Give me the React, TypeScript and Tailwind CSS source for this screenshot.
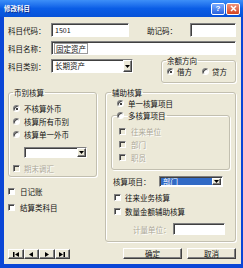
import React from "react";

const sunken =
  "border border-t-[#808080] border-l-[#808080] border-b-white border-r-white shadow-[inset_1px_1px_0_#404040]";
const raised =
  "border border-t-white border-l-white border-b-[#404040] border-r-[#404040] shadow-[inset_-1px_-1px_0_#808080] bg-[#ece9d8]";
const group = "border border-[#c2bfb0] rounded-[3px] shadow-[inset_1px_1px_0_#fff,1px_1px_0_#fff]";
const txt = "text-[7.5px] leading-[13px] whitespace-nowrap";
const dim = "text-[#aca899] [text-shadow:1px_1px_0_#fff]";

function Arrow() {
  return (
    <span className={`w-[9px] h-full flex items-center justify-center shrink-0 ${raised}`}>
      <svg width="5" height="3" viewBox="0 0 5 3">
        <path d="M0 0h5L2.5 3z" fill="#000" />
      </svg>
    </span>
  );
}

function Radio({ on }: { on?: boolean }) {
  return (
    <span className={`w-[7px] h-[7px] shrink-0 rounded-full bg-white flex items-center justify-center ${sunken}`}>
      {on && <span className="w-[2px] h-[2px] rounded-full bg-black" />}
    </span>
  );
}

function Check({ off }: { off?: boolean }) {
  return <span className={`w-[7px] h-[7px] shrink-0 ${off ? "bg-[#ece9d8]" : "bg-white"} ${sunken}`} />;
}

function NavBtn({ kind }: { kind: "first" | "prev" | "next" | "last" }) {
  return (
    <span className={`w-[15.5px] h-full flex items-center justify-center ${raised} bg-[#d6d3ca]`}>
      <svg width="6" height="5" viewBox="0 0 6 5" fill="#000">
        {kind === "first" && (
          <>
            <rect x="0" y="0" width="1.5" height="5" />
            <path d="M6 0v5L2 2.5z" />
          </>
        )}
        {kind === "prev" && <path d="M5 0v5L1 2.5z" />}
        {kind === "next" && <path d="M1 0v5l4-2.5z" />}
        {kind === "last" && (
          <>
            <path d="M0 0v5l4-2.5z" />
            <rect x="4.5" y="0" width="1.5" height="5" />
          </>
        )}
      </svg>
    </span>
  );
}

export default function App() {
  return (
    <div className="w-[243px] h-[268px] flex flex-col bg-[#0a46d6] font-['Noto_Sans_CJK_SC',sans-serif] text-[#111] overflow-hidden">
      {/* title bar */}
      <div className="h-[17px] shrink-0 flex items-center pl-[4px] pr-[3px] bg-linear-to-b from-[#3d8ff8] via-[#0a5de6] to-[#0752d8]">
        <span className="text-[6.5px] font-bold text-white leading-none [text-shadow:1px_1px_0_#0a2a8a]">修改科目</span>
        <div className="ml-auto flex gap-[1px]">
          <span className="w-[14px] h-[12px] rounded-[2px] border border-white bg-linear-to-b from-[#79aaff] to-[#2a62de] text-white text-[8px] font-bold leading-none flex items-center justify-center font-['Liberation_Sans',sans-serif]">
            ?
          </span>
          <span className="w-[14px] h-[12px] rounded-[2px] border border-white bg-linear-to-b from-[#f0937a] to-[#d4411c] flex items-center justify-center">
            <svg width="7" height="7" viewBox="0 0 7 7">
              <path d="M1 1l5 5M6 1L1 6" stroke="#fff" strokeWidth="1.5" />
            </svg>
          </span>
        </div>
      </div>

      <div className="flex-1 flex pl-[4px] pr-[5px] pb-[4px]">
        <div className="flex-1 bg-[#ece9d8] pt-[6px] pl-[4px] pr-[5px] flex flex-col">
          {/* row 1 */}
          <div className="h-[14px] flex items-center">
            <span className={`${txt} w-[43px]`}>科目代码：</span>
            <span className={`w-[78px] h-full bg-white flex items-center pl-[3px] text-[7px] ${sunken}`}>1501</span>
            <span className={`${txt} ml-[18px]`}>助记码：</span>
            <span className={`ml-auto w-[46px] h-full bg-white ${sunken}`} />
          </div>
          {/* row 2 */}
          <div className="h-[14px] mt-[4px] flex items-center">
            <span className={`${txt} w-[43px]`}>科目名称：</span>
            <span className={`flex-1 h-full bg-white flex items-center pl-[2px] ${sunken}`}>
              <span className="text-[7.5px] leading-[9px] border border-[#9a9a9a] px-[1px]">固定资产</span>
            </span>
          </div>
          {/* row 3 */}
          <div className="mt-[4px] flex items-start">
            <div className="h-[14px] flex items-center">
              <span className={`${txt} w-[43px]`}>科目类别：</span>
              <span className={`w-[82px] h-full bg-white flex ${sunken}`}>
                <span className="flex-1 text-[7.5px] leading-[12px] pl-[3px]">长期资产</span>
                <Arrow />
              </span>
            </div>
            <fieldset className={`ml-auto -mt-[3px] w-[75px] h-[27px] ${group}`}>
              <legend className="ml-[4px] px-[1px] text-[7.5px] leading-[9px]">余额方向</legend>
              <div className="h-[13px] flex items-center pl-[5px]">
                <Radio on />
                <span className={`${txt} ml-[3px]`}>借方</span>
                <span className="ml-[10px]">
                  <Radio />
                </span>
                <span className={`${txt} ml-[3px]`}>贷方</span>
              </div>
            </fieldset>
          </div>

          {/* main */}
          <div className="mt-[5px] flex flex-1 pb-[5px]">
            {/* left column */}
            <div className="w-[89px] flex flex-col">
              <fieldset className={`h-[89px] pl-[4px] ${group}`}>
                <legend className="ml-0 px-[1px] text-[7.5px] leading-[9px]">币别核算</legend>
                <div className="pt-[5px] flex flex-col">
                  <div className="h-[13px] flex items-center gap-[4px]">
                    <Radio on />
                    <span className={txt}>不核算外币</span>
                  </div>
                  <div className="h-[13px] flex items-center gap-[4px]">
                    <Radio />
                    <span className={txt}>核算所有币别</span>
                  </div>
                  <div className="h-[13px] flex items-center gap-[4px]">
                    <Radio />
                    <span className={txt}>核算单一外币</span>
                  </div>
                  <span className={`mt-[6px] ml-[11px] w-[63px] h-[11px] bg-white flex ${sunken}`}>
                    <span className="flex-1" />
                    <Arrow />
                  </span>
                  <div className="mt-[4px] h-[13px] flex items-center gap-[4px]">
                    <Check off />
                    <span className={`${txt} ${dim}`}>期末调汇</span>
                  </div>
                </div>
              </fieldset>
              <div className="mt-[8px] h-[13px] flex items-center gap-[5px]">
                <Check />
                <span className={txt}>日记账</span>
              </div>
              <div className="mt-[3px] h-[13px] flex items-center gap-[5px]">
                <Check />
                <span className={txt}>结算类科目</span>
              </div>
              <div className="mt-auto h-[10px] flex">
                <NavBtn kind="first" />
                <NavBtn kind="prev" />
                <NavBtn kind="next" />
                <NavBtn kind="last" />
              </div>
            </div>

            {/* right column */}
            <div className="ml-[8px] flex-1 flex flex-col">
              <fieldset className={`h-[154px] ${group}`}>
                <legend className="ml-[5px] px-[1px] text-[7.5px] leading-[9px]">辅助核算</legend>
                <div className="h-[13px] flex items-center gap-[4px] pl-[11px]">
                  <Radio on />
                  <span className={txt}>单一核算项目</span>
                </div>
                <fieldset className={`mx-[5px] -mt-[1px] h-[61px] pl-[7px] ${group}`}>
                  <legend className="-ml-[2px] h-[13px] flex items-center gap-[4px] pr-[1px]">
                    <Radio />
                    <span className={txt}>多核算项目</span>
                  </legend>
                  <div className="pt-[3px] flex flex-col">
                    <div className="h-[13px] flex items-center gap-[5px]">
                      <Check off />
                      <span className={`${txt} ${dim}`}>往来单位</span>
                    </div>
                    <div className="h-[13px] flex items-center gap-[5px]">
                      <Check off />
                      <span className={`${txt} ${dim}`}>部门</span>
                    </div>
                    <div className="h-[13px] flex items-center gap-[5px]">
                      <Check off />
                      <span className={`${txt} ${dim}`}>职员</span>
                    </div>
                  </div>
                </fieldset>
                <div className="mt-[6px] h-[11px] flex items-center pl-[7px]">
                  <span className={`${txt} w-[46px]`}>核算项目：</span>
                  <span className={`w-[64px] h-full bg-white flex p-[1px] ${sunken}`}>
                    <span className="flex-1 bg-[#316ac5] text-white text-[7.5px] leading-[8px] pl-[2px]">部门</span>
                    <Arrow />
                  </span>
                </div>
                <div className="mt-[4px] h-[13px] flex items-center gap-[4px] pl-[8px]">
                  <Check />
                  <span className={txt}>往来业务核算</span>
                </div>
                <div className="mt-[1px] h-[13px] flex items-center gap-[4px] pl-[8px]">
                  <Check />
                  <span className={txt}>数量金额辅助核算</span>
                </div>
                <div className="mt-[5px] h-[12px] flex items-center pl-[27px]">
                  <span className={`${txt} ${dim} w-[40px]`}>计量单位：</span>
                  <span className={`w-[52px] h-full bg-white ${sunken}`} />
                </div>
              </fieldset>
              <div className="mt-[6px] h-[11px] flex">
                <span className={`ml-[18px] w-[59px] h-full flex items-center justify-center ${raised}`}>
                  <span className="text-[7.5px] leading-none">确定</span>
                </span>
                <span className={`ml-[5px] w-[49px] h-full flex items-center justify-center ${raised}`}>
                  <span className="text-[7.5px] leading-none">取消</span>
                </span>
              </div>
            </div>
          </div>
        </div>
      </div>
    </div>
  );
}
